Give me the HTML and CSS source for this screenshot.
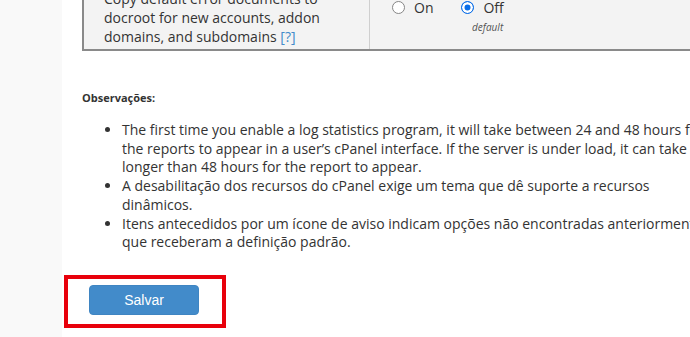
FILE: index.html
```html
<!DOCTYPE html>
<html lang="pt">
<head>
<meta charset="utf-8">
<link rel="stylesheet" href="styles.css">
</head>
<body>
<div class="page">
  <aside class="sidebar"></aside>
  <main class="main">
    <div class="settings">
      <div class="cell label">Copy default error documents to docroot for new accounts, addon domains, and subdomains <a class="help" href="#">[?]</a></div>
      <div class="cell options">
        <label class="opt"><span class="radio"></span>On</label>
        <div class="opt-col">
          <label class="opt"><span class="radio checked"></span>Off</label>
          <span class="default">default</span>
        </div>
      </div>
    </div>
    <div class="notes">
      <h4 class="notes-title">Observações:</h4>
      <ul class="notes-list">
        <li>The first time you enable a log statistics program, it will take between 24 and 48 hours for the reports to appear in a user’s cPanel interface. If the server is under load, it can take longer than 48 hours for the report to appear.</li>
        <li>A desabilitação dos recursos do cPanel exige um tema que dê suporte a recursos dinâmicos.</li>
        <li>Itens antecedidos por um ícone de aviso indicam opções não encontradas anteriormente que receberam a definição padrão.</li>
      </ul>
    </div>
    <div class="actions">
      <div class="highlight">
        <button class="btn-save" type="button">Salvar</button>
      </div>
    </div>
  </main>
</div>
</body>
</html>
```
FILE: styles.css
```css
html, body {
  margin: 0;
  padding: 0;
  background: #fff;
}
body {
  font-family: "Open Sans", "Liberation Sans", sans-serif;
  color: #333;
  width: 690px;
  height: 337px;
  overflow: hidden;
}
.page {
  display: flex;
  height: 337px;
}
.sidebar {
  width: 62px;
  flex: 0 0 62px;
  background: #f9f9f9;
}
.main {
  flex: 1;
  padding-left: 20px;
  min-width: 0;
  margin-top: -11px;
}
.settings {
  display: flex;
  width: 700px;
  background: #f3f3f3;
  border-left: 2px solid #8a8a8a;
  border-bottom: 2px solid #8a8a8a;
}
.cell {
  box-sizing: border-box;
}
.label {
  width: 286px;
  padding: 0 16px 3px 20px;
  font-size: 14px;
  line-height: 19px;
  border-right: 1px solid #cfcfcf;
}
.help {
  color: #428bca;
  text-decoration: none;
}
.options {
  display: flex;
  align-items: flex-start;
  gap: 28px;
  padding: 9px 0 0 22px;
}
.opt-col {
  display: flex;
  flex-direction: column;
  align-items: center;
}
.opt {
  display: flex;
  align-items: center;
  gap: 9px;
  font-size: 14px;
  line-height: 19px;
}
.radio {
  box-sizing: border-box;
  width: 13px;
  height: 13px;
  border-radius: 50%;
  border: 1px solid #858585;
  background: #fff;
}
.radio.checked {
  border: 1.5px solid #0a6ee8;
  background: #0a6ee8;
  box-shadow: inset 0 0 0 2.5px #fff;
}
.default {
  font-size: 10px;
  font-style: italic;
  color: #555;
  margin-top: 3px;
  padding-left: 10px;
}
.notes {
  padding-top: 39px;
}
.notes-title {
  margin: 0;
  font-size: 11px;
  line-height: 15px;
  font-weight: 700;
  color: #333;
}
.notes-list {
  margin: 16px 0 0;
  padding-left: 40px;
  font-size: 14px;
  line-height: 18.7px;
  width: 590px;
}
.actions {
  padding-top: 23px;
}
.highlight {
  display: inline-flex;
  box-sizing: border-box;
  width: 162px;
  height: 53px;
  border: 4px solid #e8000b;
  padding: 6px 0 0 21px;
  margin-left: -18px;
}
.btn-save {
  width: 110px;
  height: 30px;
  border: 1px solid #3f85c2;
  border-radius: 4px;
  background: #428bca;
  color: #fff;
  font-family: "Liberation Sans", Arial, sans-serif;
  font-size: 14px;
  padding: 0;
}
```
